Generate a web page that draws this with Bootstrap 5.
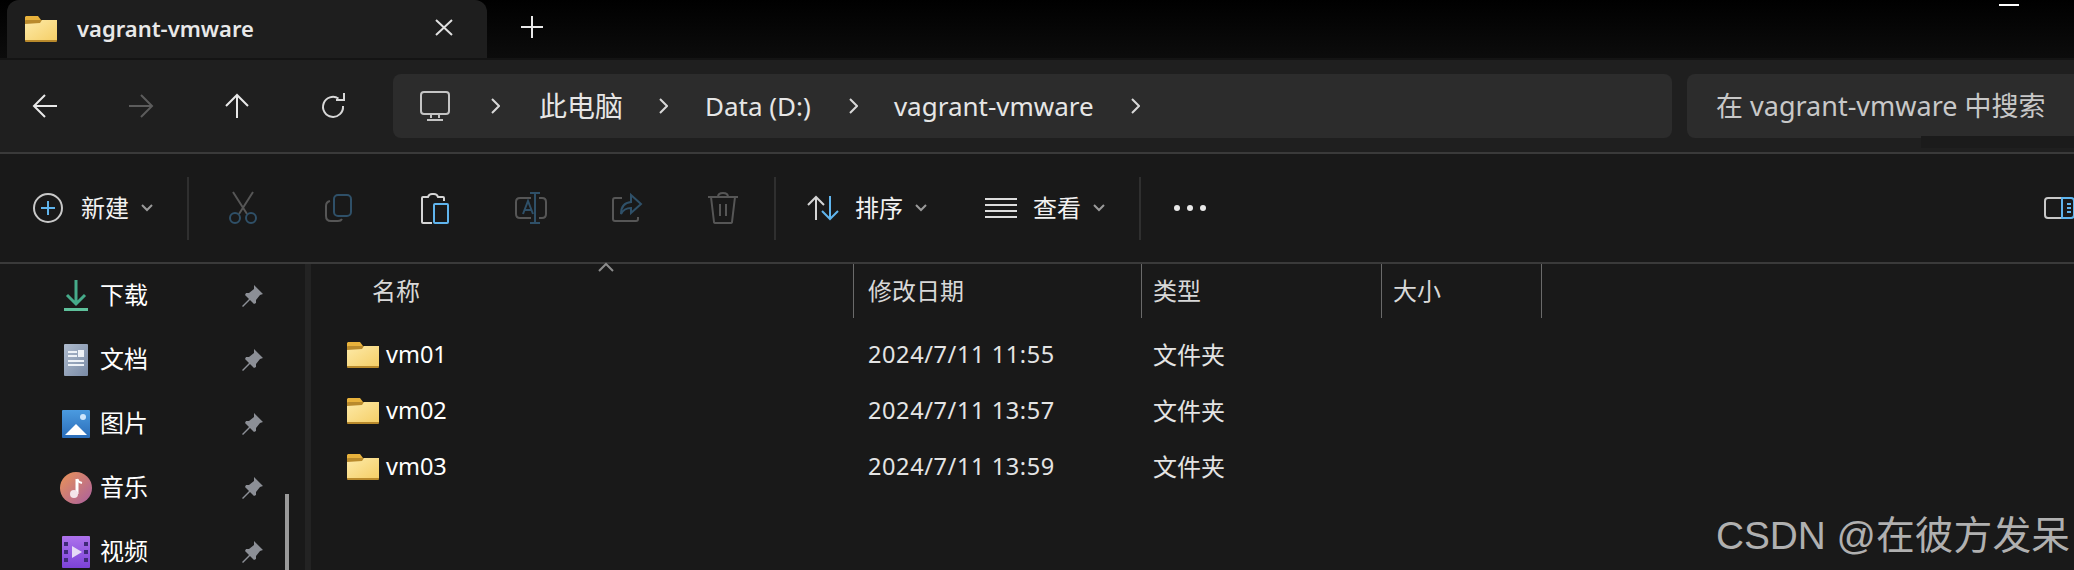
<!doctype html>
<html lang="zh-CN">
<head>
<meta charset="utf-8">
<title>vagrant-vmware</title>
<link href="https://cdn.jsdelivr.net/npm/bootstrap@5.3.0/dist/css/bootstrap.min.css" rel="stylesheet">
<style>
html,body{height:570px;overflow:hidden}
body{background:#191919;color:#fff;font-family:"Noto Sans","Noto Sans CJK SC",sans-serif;position:relative;width:2074px}
svg{display:block;flex:none;overflow:visible}
.ic{fill:none;stroke-width:2}
.titlebar{height:58px;background:linear-gradient(#000,#0c0c0c);padding-left:7px}
.tabx{width:480px;height:58px;background:#1e1e1e;border-radius:12px 12px 0 0;padding-left:18px}
.tabtext{font-size:22px;font-weight:600;color:#e8e8e8;margin-left:20px;width:181px;white-space:nowrap;transform:translateY(-1px)}
.tabclose{margin-left:177px;margin-top:-4px}
.tabplus{margin-left:34px;margin-top:-4px}
.minbar{width:20px;height:2px;background:#fff;margin-left:1456px;margin-top:-48px}
.gapline{height:2px;background:#141414}
.navrow{height:92px;background:#1f1f1f;padding-left:33px;position:relative}
.navrow::after{content:"";position:absolute;left:1921px;right:0;top:76px;height:12px;background:#1b1b1b}
.navslot{width:96px}
.addr{width:1279px;height:64px;background:#2c2c2c;border-radius:8px;margin-left:-24px;padding-left:27px;font-size:26px;color:#e6e6e6}
.searchbox{width:387px;height:64px;background:#2c2c2c;border-radius:8px 0 0 8px;margin-left:15px;padding-left:29px;font-size:27px;color:#c8c8c8;white-space:nowrap}
.cjkbig{font-size:28px}
.sepline{height:2px;background:#3a3a3a}
.toolrow{height:108px;background:#191919;padding-left:33px}
.toollabel{font-size:24px;line-height:1;color:#f2f2f2}
.toolsep{width:2px;height:63px;background:#2f2f2f}
.toolslot{width:96px}
.mainarea{height:306px;background:#191919}
.sidepane{width:305px;height:306px;overflow:hidden}
.siderow{height:64px;padding-left:60px;flex:none}
.sidecell{width:32px;margin-right:8px}
.sidetext{font-size:24px;line-height:1;width:141px;color:#fff;transform:translateY(-1px)}
.paneline{width:6px;background:#232323}
.listpane{flex:1;position:relative}
.headrow{height:54px;color:#d8d8d8;font-size:24px}
.colname{width:543px;padding-left:61px}
.coldate{width:288px;padding-left:14px}
.coltype{width:240px;padding-left:11px}
.colsize{width:160px;padding-left:11px}
.coledge{border-right:1px solid #6a6a6a;height:54px}
.filerow{height:56px;font-size:23.5px;color:#fff}
.filefirst{margin-top:9px}
.fname{width:543px;padding-left:36px;gap:7px}
.fdate{width:288px;padding-left:14px;color:#e4e4e4;letter-spacing:.6px}
.ftype{color:#e4e4e4;padding-left:11px;font-size:24px}
.sortmark{left:287px;top:-1px}
.sbar{width:4px;height:76px;background:#9a9a9a;left:285px;top:494px}
.wmark{right:4px;bottom:12px;font-family:"Liberation Sans","Noto Sans CJK SC",sans-serif;font-size:38.8px;line-height:1.1;color:#b0b0b0;white-space:nowrap}
</style>
</head>
<body>
<svg width="0" height="0" class="position-absolute">
<defs>
<linearGradient id="fg" x1="0" y1="0" x2="1" y2="1"><stop offset="0" stop-color="#fdeaa8"/><stop offset="1" stop-color="#f5cf68"/></linearGradient>
<linearGradient id="pg" x1="0" y1="0" x2="0" y2="1"><stop offset="0" stop-color="#4b9be0"/><stop offset="1" stop-color="#2a6cb8"/></linearGradient>
<linearGradient id="mg" x1="0" y1="0" x2="1" y2="1"><stop offset="0" stop-color="#eb9456"/><stop offset="1" stop-color="#a95f9f"/></linearGradient>
<linearGradient id="vg" x1="0" y1="0" x2="0" y2="1"><stop offset="0" stop-color="#ad72ec"/><stop offset="1" stop-color="#7c42d8"/></linearGradient>
<linearGradient id="dg" x1="0" y1="0" x2="1" y2="1"><stop offset="0" stop-color="#aebbcd"/><stop offset="1" stop-color="#7a8ba6"/></linearGradient>
<symbol id="folder" viewBox="0 0 32 26">
<path d="M1 0h12l3 4h16v4H0V1z" fill="#e8b23c"/>
<rect x="0" y="4" width="32" height="22" rx="1" fill="#b98a2c"/>
<path d="M0 8l15-1 2-3h15v20H0z" fill="url(#fg)"/>
</symbol>
<symbol id="pin" viewBox="0 0 22 22">
<path d="M13 0l9 9-3 1-4 5 0 3-2 1-4-4-7 7-1-1 7-7-4-4 1-2h3l5-4z" fill="#8c8f96"/>
</symbol>
<symbol id="chev" viewBox="0 0 12 8"><path d="M1 1l5 5 5-5" fill="none" stroke="#9a9a9a" stroke-width="2"/></symbol>
<symbol id="crumb" viewBox="0 0 9 16"><path d="M1 1l7 7-7 7" fill="none" stroke="#d8d8d8" stroke-width="2"/></symbol>
</defs>
</svg>

<div class="titlebar d-flex align-items-start">
  <div class="tabx d-flex align-items-center">
    <svg width="32" height="26"><use href="#folder"/></svg>
    <span class="tabtext">vagrant-vmware</span>
    <svg class="tabclose" width="18" height="17" viewBox="0 0 18 17"><path d="M1 1l16 15M17 1L1 16" stroke="#e0e0e0" stroke-width="2"/></svg>
  </div>
  <svg class="tabplus align-self-center" width="22" height="22" viewBox="0 0 22 22"><path d="M11 0v22M0 11h22" stroke="#e8e8e8" stroke-width="2"/></svg>
  <div class="minbar align-self-center"></div>
</div>
<div class="gapline"></div>

<div class="navrow d-flex align-items-center">
  <div class="navslot"><svg width="24" height="24" viewBox="0 0 24 24"><path d="M24 12H1M12 1L1 12l11 11" class="ic" stroke="#e8e8e8"/></svg></div>
  <div class="navslot"><svg width="24" height="24" viewBox="0 0 24 24"><path d="M0 12h23M12 1l11 11-11 11" class="ic" stroke="#5c5c5c"/></svg></div>
  <div class="navslot"><svg width="24" height="24" viewBox="0 0 24 24"><path d="M12 24V1M1 12L12 1l11 11" class="ic" stroke="#e8e8e8"/></svg></div>
  <div class="navslot"><svg width="25" height="24" viewBox="0 0 25 24"><path d="M17.500 4.500A10 10 0 1 0 22 12" class="ic" stroke="#d8d8d8"/><path d="M15 6h8V-1" class="ic" stroke="#d8d8d8"/></svg></div>
  <div class="addr d-flex align-items-center">
    <svg width="30" height="30" viewBox="0 0 30 30"><rect x="1" y="1" width="28" height="22" rx="3" class="ic" stroke="#c4c4c4"/><path d="M11 24v3M19 24v3M7 29h16" class="ic" stroke="#c4c4c4"/></svg>
    <svg style="margin-left:41px;margin-right:39px" width="9" height="16"><use href="#crumb"/></svg>
    <span class="cjkbig">此电脑</span>
    <svg style="margin-left:36px;margin-right:37px" width="9" height="16"><use href="#crumb"/></svg>
    <span>Data (D:)</span>
    <svg style="margin-left:38px;margin-right:36px" width="9" height="16"><use href="#crumb"/></svg>
    <span>vagrant-vmware</span>
    <svg style="margin-left:37px" width="9" height="16"><use href="#crumb"/></svg>
  </div>
  <div class="searchbox d-flex align-items-center">在 vagrant-vmware 中搜索</div>
</div>
<div class="sepline"></div>

<div class="toolrow d-flex align-items-center position-relative">
  <svg width="30" height="30" viewBox="0 0 30 30"><circle cx="15" cy="15" r="14" class="ic" stroke="#c8c8c8"/><path d="M15 8v14M8 15h14" class="ic" stroke="#60b5ee"/></svg>
  <span class="toollabel me-2" style="margin-left:18px">新建</span>
  <svg class="ms-1" width="12" height="8"><use href="#chev"/></svg>
  <div class="toolsep" style="margin-left:34px;margin-right:6px"></div>
  <div class="toolslot d-flex justify-content-center"><svg width="30" height="32" viewBox="0 0 30 32"><path d="M5 0l14 22M25 0L11 22" class="ic" stroke="#565656"/><circle cx="7" cy="26" r="5" class="ic" stroke="#2f5068"/><circle cx="23" cy="26" r="5" class="ic" stroke="#2f5068"/></svg></div>
  <div class="toolslot d-flex justify-content-center"><svg width="28" height="28" viewBox="0 0 28 28"><rect x="9" y="1" width="17" height="21" rx="4" class="ic" stroke="#2f5068"/><path d="M5 7Q1 8 1 12v10q0 5 5 5h7q3 0 4-2" class="ic" stroke="#565656"/></svg></div>
  <div class="toolslot d-flex justify-content-center"><svg width="28" height="31" viewBox="0 0 28 31"><path d="M11 30H2a1 1 0 0 1-1-1V5a1 1 0 0 1 1-1h5q1-3 4-3h2q3 0 4 3h5a1 1 0 0 1 1 1v3" class="ic" stroke="#d4d4d4"/><rect x="13" y="11" width="14" height="19" rx="1" class="ic" stroke="#60b5ee"/></svg></div>
  <div class="toolslot d-flex justify-content-center"><svg width="32" height="32" viewBox="0 0 32 32"><path d="M16 6H5q-4 0-4 4v12q0 4 4 4h11M24 6h3q4 0 4 4v12q0 4-4 4h-3" class="ic" stroke="#565656"/><path d="M20 1v30M15 1h10M15 31h10M8 22l5-13 5 13M10 18h6" class="ic" stroke="#2f5068"/></svg></div>
  <div class="toolslot d-flex justify-content-center"><svg width="30" height="28" viewBox="0 0 30 28"><path d="M10 4H3Q1 4 1 6v19q0 2 2 2h21q2 0 2-2v-2" class="ic" stroke="#565656"/><path d="M19 1l10 9-10 9v-5q-7 0-10 6 0-11 10-12z" class="ic" stroke="#2f5068"/></svg></div>
  <div class="toolslot d-flex justify-content-center"><svg width="30" height="32" viewBox="0 0 30 32"><path d="M0 5h30M10 5q0-4 5-4t5 4M3 5l3 25q0 1 2 1h14q2 0 2-1l3-25M12 12v12M18 12v12" class="ic" stroke="#565656"/></svg></div>
  <div class="toolsep" style="margin-left:3px;margin-right:31px"></div>
  <svg width="33" height="24" viewBox="0 0 33 24"><path d="M9 24V1M1 9l8-8 8 8" class="ic" stroke="#d4d4d4"/><path d="M23 0v23M15 15l8 8 8-8" class="ic" stroke="#60b5ee"/></svg>
  <span class="toollabel" style="margin-left:15px">排序</span>
  <svg style="margin-left:12px" width="12" height="8"><use href="#chev"/></svg>
  <svg style="margin-left:58px" width="32" height="20" viewBox="0 0 32 20"><path d="M0 1h32M0 7h32M0 13h32M0 19h32" stroke="#dcdcdc" stroke-width="2"/></svg>
  <span class="toollabel" style="margin-left:16px">查看</span>
  <svg style="margin-left:12px" width="12" height="8"><use href="#chev"/></svg>
  <div class="toolsep" style="margin-left:34px"></div>
  <svg style="margin-left:32px" width="34" height="6" viewBox="0 0 34 6"><circle cx="4" cy="3" r="3" fill="#e8e8e8"/><circle cx="17" cy="3" r="3" fill="#e8e8e8"/><circle cx="30" cy="3" r="3" fill="#e8e8e8"/></svg>
  <svg class="ms-auto" width="30" height="22" viewBox="0 0 30 22"><path d="M18 21H4q-3 0-3-3V4q0-3 3-3h14" class="ic" stroke="#c8c8c8"/><path d="M18 1h9q3 0 3 3v14q0 3-3 3h-9zM23 7h4M23 11h4M23 15h4" class="ic" stroke="#60b5ee"/></svg>
</div>
<div class="sepline"></div>

<div class="mainarea d-flex position-relative">
  <div class="sidepane d-flex flex-column">
    <div class="siderow d-flex align-items-center">
      <div class="sidecell d-flex justify-content-center"><svg width="24" height="32" viewBox="0 0 24 32"><path d="M12 0v24M3 15l9 9 9-9" fill="none" stroke="#46ab8a" stroke-width="3"/><rect y="28" width="24" height="3" fill="#5ec09b"/></svg></div>
      <span class="sidetext">下载</span>
      <svg width="22" height="22"><use href="#pin"/></svg>
    </div>
    <div class="siderow d-flex align-items-center">
      <div class="sidecell d-flex justify-content-center"><svg width="24" height="32" viewBox="0 0 24 32"><rect width="24" height="32" rx="1" fill="url(#dg)"/><path d="M4 8h9M4 12h9M4 17h16M4 21h16" stroke="#eef2f7" stroke-width="2"/><rect x="14" y="6" width="6" height="7" fill="#eef2f7"/></svg></div>
      <span class="sidetext">文档</span>
      <svg width="22" height="22"><use href="#pin"/></svg>
    </div>
    <div class="siderow d-flex align-items-center">
      <div class="sidecell d-flex justify-content-center"><svg width="28" height="28" viewBox="0 0 28 28"><rect width="28" height="28" rx="1" fill="url(#pg)"/><path d="M3 25L14 14l11 11z" fill="#fff"/><circle cx="21" cy="7" r="3" fill="#cfe6fb"/></svg></div>
      <span class="sidetext">图片</span>
      <svg width="22" height="22"><use href="#pin"/></svg>
    </div>
    <div class="siderow d-flex align-items-center">
      <div class="sidecell d-flex justify-content-center"><svg width="32" height="32" viewBox="0 0 32 32"><circle cx="16" cy="16" r="16" fill="url(#mg)"/><path d="M17 7v15" stroke="#fff" stroke-width="3"/><path d="M17 7q1 3 5 4" fill="none" stroke="#fff" stroke-width="2"/><circle cx="14" cy="22" r="4" fill="#f4e4ea"/></svg></div>
      <span class="sidetext">音乐</span>
      <svg width="22" height="22"><use href="#pin"/></svg>
    </div>
    <div class="siderow d-flex align-items-center">
      <div class="sidecell d-flex justify-content-center"><svg width="28" height="32" viewBox="0 0 28 32"><rect width="28" height="32" rx="1" fill="url(#vg)"/><g fill="#3f2a78"><rect x="2" y="6" width="4" height="4"/><rect x="2" y="14" width="4" height="4"/><rect x="2" y="22" width="4" height="4"/><rect x="22" y="6" width="4" height="4"/><rect x="22" y="14" width="4" height="4"/><rect x="22" y="22" width="4" height="4"/></g><path d="M10 10l10 6-10 6z" fill="#e6daf6"/></svg></div>
      <span class="sidetext">视频</span>
      <svg width="22" height="22"><use href="#pin"/></svg>
    </div>
  </div>
  <div class="paneline"></div>
  <div class="listpane">
    <svg class="position-absolute sortmark" width="16" height="9" viewBox="0 0 16 9"><path d="M1 8l7-7 7 7" fill="none" stroke="#8c8c8c" stroke-width="2"/></svg>
    <div class="headrow d-flex align-items-center">
      <div class="colname coledge d-flex align-items-center">名称</div>
      <div class="coldate coledge d-flex align-items-center">修改日期</div>
      <div class="coltype coledge d-flex align-items-center">类型</div>
      <div class="colsize coledge d-flex align-items-center">大小</div>
    </div>
    <div class="filerow filefirst d-flex align-items-center">
      <div class="fname d-flex align-items-center"><svg width="32" height="26"><use href="#folder"/></svg><span>vm01</span></div>
      <div class="fdate">2024/7/11 11:55</div><div class="ftype">文件夹</div>
    </div>
    <div class="filerow d-flex align-items-center">
      <div class="fname d-flex align-items-center"><svg width="32" height="26"><use href="#folder"/></svg><span>vm02</span></div>
      <div class="fdate">2024/7/11 13:57</div><div class="ftype">文件夹</div>
    </div>
    <div class="filerow d-flex align-items-center">
      <div class="fname d-flex align-items-center"><svg width="32" height="26"><use href="#folder"/></svg><span>vm03</span></div>
      <div class="fdate">2024/7/11 13:59</div><div class="ftype">文件夹</div>
    </div>
  </div>
</div>
<div class="sbar position-absolute"></div>
<div class="wmark position-absolute">CSDN @在彼方发呆</div>
<script src="https://cdn.jsdelivr.net/npm/bootstrap@5.3.0/dist/js/bootstrap.bundle.min.js"></script>
</body>
</html>
